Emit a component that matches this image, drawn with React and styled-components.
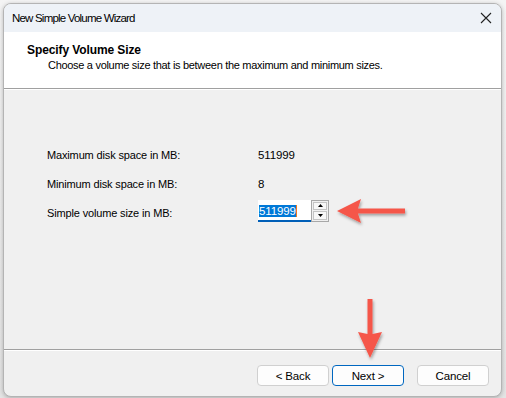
import React from "react";
import styled, { createGlobalStyle } from "styled-components";

const GlobalStyle = createGlobalStyle`
  html, body {
    margin: 0;
    padding: 0;
    background: #e9e9e9;
  }
  body {
    font-family: "Liberation Sans", Arial, sans-serif;
    font-size: 11px;
    letter-spacing: -0.15px;
    color: #000;
  }
`;

const Desktop = styled.div`
  width: 506px;
  height: 398px;
  box-sizing: border-box;
  padding: 3px 4px 3px 3px;
  background: linear-gradient(#f4f4f4, #e4e4e4);
  overflow: hidden;
`;

const Window = styled.div`
  position: relative;
  height: 392px;
  display: flex;
  flex-direction: column;
  border: 1px solid #b4b4b4;
  border-radius: 8px;
  overflow: hidden;
  background: #f0f0f0;
  box-shadow: 0 1px 4px rgba(0, 0, 0, 0.25);
`;

const TitleBar = styled.div`
  height: 28px;
  display: flex;
  align-items: center;
  justify-content: space-between;
  padding: 0 9px 0 8px;
  background: #eef2f7;
  font-size: 11.5px;
  letter-spacing: -0.8px;
`;

const CloseButton = styled.svg`
  width: 12px;
  height: 12px;
`;

const Header = styled.div`
  height: 57px;
  box-sizing: border-box;
  padding: 11px 0 0 23px;
  background: #fff;
  border-bottom: 1px solid #a0a0a0;
  box-shadow: 0 1px 0 #fff;
`;

const HeaderTitle = styled.div`
  font-weight: bold;
  font-size: 12px;
  letter-spacing: -0.1px;
  line-height: 15px;
`;

const HeaderSub = styled.div`
  padding-left: 21px;
  line-height: 15px;
  letter-spacing: -0.3px;
`;

const Body = styled.div`
  position: relative;
  flex: 1;
  box-sizing: border-box;
  padding: 51px 0 0 43px;
  border-bottom: 1px solid #a0a0a0;
`;

const FieldGrid = styled.div`
  display: grid;
  grid-template-columns: 211px auto;
  grid-auto-rows: 29px;
  align-items: center;
`;

const Label = styled.div`
  line-height: 16px;
`;

const Value = styled.div`
  line-height: 16px;
  font-size: 11.5px;
`;

const SpinBox = styled.div`
  display: flex;
  align-items: stretch;
  height: 22px;
  margin-top: -4px;
`;

const SizeInput = styled.div`
  width: 53px;
  box-sizing: border-box;
  padding: 3px 0 0 1px;
  background: #fff;
  border-bottom: 2px solid #005fb8;
  font-size: 11.5px;
  line-height: 16px;
`;

const Selected = styled.span`
  background: #0078d7;
  color: #fff;
  border-right: 1px solid #f07a1e;
`;

const SpinButtons = styled.div`
  width: 18px;
  box-sizing: border-box;
  display: flex;
  flex-direction: column;
  gap: 1px;
  padding: 1px;
  border: 1px solid #a8a8a8;
  background: #f0f0f0;
`;

const SpinButton = styled.div`
  flex: 1;
  display: flex;
  align-items: center;
  justify-content: center;
  border: 1px solid #c4c4c4;
  background: #f7f7f7;
  svg {
    width: 5px;
    height: 3px;
  }
`;

const Footer = styled.div`
  height: 46px;
  display: flex;
  align-items: flex-start;
  padding: 14px 0 0 253px;
  box-sizing: border-box;
  border-top: 1px solid #fff;
`;

const Button = styled.div`
  width: 72px;
  height: 21px;
  box-sizing: border-box;
  display: flex;
  align-items: center;
  justify-content: center;
  margin-right: ${(p) => p.gap || 0}px;
  background: #fdfdfd;
  border: 1px solid ${(p) => (p.focused ? "#0067c0" : "#d0d0d0")};
  border-radius: 4px;
  font-size: 11.5px;
`;

const Overlay = styled.svg`
  position: absolute;
  overflow: visible;
  pointer-events: none;
`;

const LeftArrow = styled(Overlay)`
  left: 331px;
  top: 109px;
  width: 72px;
  height: 26px;
`;

const DownArrow = styled(Overlay)`
  left: 353px;
  top: 294px;
  width: 26px;
  height: 62px;
`;

const fields = [
  { label: "Maximum disk space in MB:", value: "511999" },
  { label: "Minimum disk space in MB:", value: "8" },
];

const Triangle = ({ up }) => (
  <svg viewBox="0 0 5 3">
    <path d={up ? "M0 3 L2.5 0 L5 3 Z" : "M0 0 L2.5 3 L5 0 Z"} fill="#000" />
  </svg>
);

const App = () => {
  return (
    <>
      <GlobalStyle />
      <Desktop>
        <Window>
          <TitleBar>
            <span>New Simple Volume Wizard</span>
            <CloseButton viewBox="0 0 12 12">
              <path d="M1 1 L11 11 M11 1 L1 11" stroke="#222" strokeWidth="1.1" />
            </CloseButton>
          </TitleBar>
          <Header>
            <HeaderTitle>Specify Volume Size</HeaderTitle>
            <HeaderSub>
              Choose a volume size that is between the maximum and minimum sizes.
            </HeaderSub>
          </Header>
          <Body>
            <FieldGrid>
              {fields.map((f) => (
                <React.Fragment key={f.label}>
                  <Label>{f.label}</Label>
                  <Value>{f.value}</Value>
                </React.Fragment>
              ))}
              <Label>Simple volume size in MB:</Label>
              <SpinBox>
                <SizeInput>
                  <Selected>511999</Selected>
                </SizeInput>
                <SpinButtons>
                  <SpinButton>
                    <Triangle up />
                  </SpinButton>
                  <SpinButton>
                    <Triangle />
                  </SpinButton>
                </SpinButtons>
              </SpinBox>
            </FieldGrid>
            <LeftArrow viewBox="0 0 72 26">
              <defs>
                <filter id="sh" x="-20%" y="-20%" width="140%" height="160%">
                  <feDropShadow dx="1" dy="2" stdDeviation="1.5" floodColor="#000" floodOpacity="0.35" />
                </filter>
              </defs>
              <path
                d="M2 13 L26 1 L23 10.5 L70 10.5 L70 15.5 L23 15.5 L26 25 Z"
                fill="#f5574a"
                filter="url(#sh)"
              />
            </LeftArrow>
          </Body>
          <Footer>
            <Button gap={3}>&lt; Back</Button>
            <Button gap={13} focused>
              Next &gt;
            </Button>
            <Button>Cancel</Button>
          </Footer>
          <DownArrow viewBox="0 0 26 62">
            <path
              d="M10.5 1 L15.5 1 L15.5 36 L25 34 L13 60 L1 34 L10.5 36 Z"
              fill="#f5574a"
              filter="url(#sh)"
            />
          </DownArrow>
        </Window>
      </Desktop>
    </>
  );
};

export default App;
